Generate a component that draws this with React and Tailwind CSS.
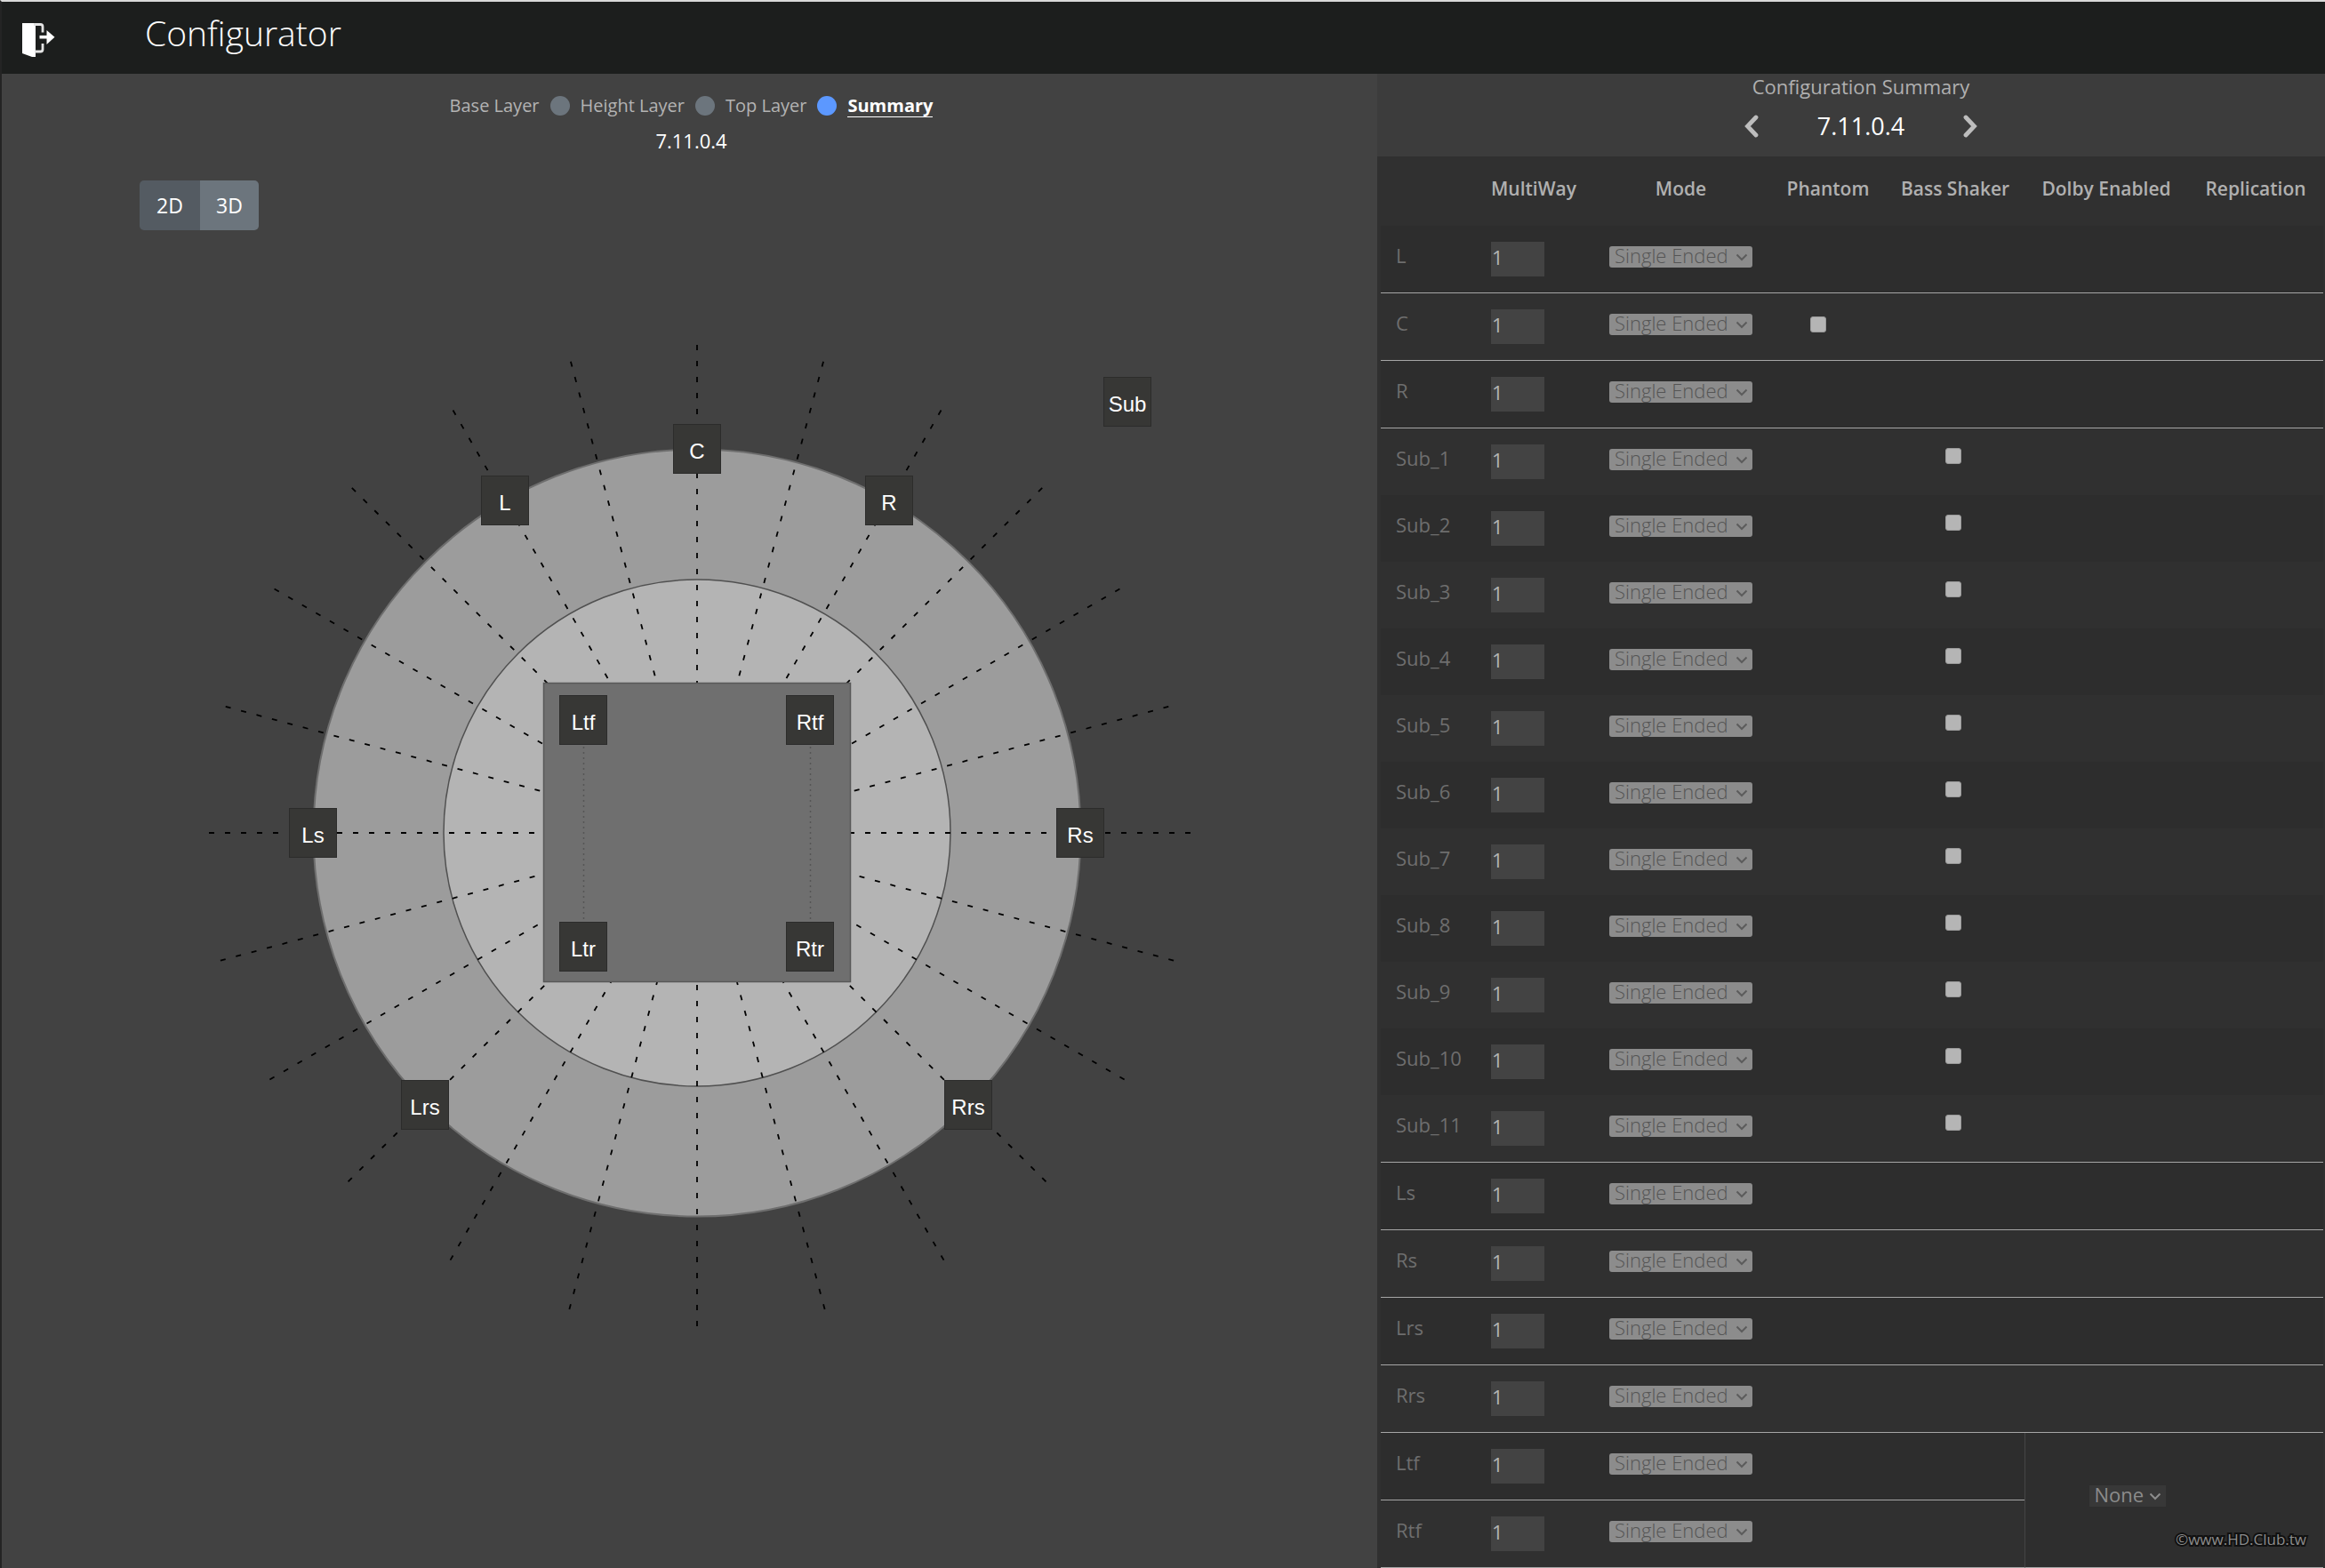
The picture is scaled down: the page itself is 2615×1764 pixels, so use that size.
import React from 'react';

const FONT = "font-['Open_Sans','Noto_Sans',sans-serif]";

// Ray diagram geometry
const CENTER = { x: 782, y: 678 };
const RAY_ANGLES = [-90, -75, -60, -45, -30, -15, 0, 15, 30, 45, 60, 75];

const SPEAKERS = [
  { name: 'C', x: 755, y: 218 },
  { name: 'L', x: 539, y: 276 },
  { name: 'R', x: 971, y: 276 },
  { name: 'Sub', x: 1239, y: 165 },
  { name: 'Ls', x: 323, y: 650 },
  { name: 'Rs', x: 1186, y: 650 },
  { name: 'Ltf', x: 627, y: 523 },
  { name: 'Rtf', x: 882, y: 523 },
  { name: 'Ltr', x: 627, y: 778 },
  { name: 'Rtr', x: 882, y: 778 },
  { name: 'Lrs', x: 449, y: 956 },
  { name: 'Rrs', x: 1060, y: 956 }
];

const CHANNELS = [
  { name: 'L', line: true },
  { name: 'C', line: true, phantom: true },
  { name: 'R', line: true },
  ...Array.from({ length: 11 }, (_, i) => ({ name: `Sub_${i + 1}`, line: i === 10, shaker: true })),
  { name: 'Ls', line: true },
  { name: 'Rs', line: true },
  { name: 'Lrs', line: true },
  { name: 'Rrs', line: true },
  { name: 'Ltf', line: true, dolby: 'open' },
  { name: 'Rtf', line: true, dolby: 'covered' }
];

function ExitIcon() {
  return <svg width="38" height="39" viewBox="0 0 38 39" fill="none" aria-hidden="true">
      <path d="M1 0H15L16 2V38H12L1 34Z" fill="#fff" />
      <path d="M14 1.500H21.500Q24 1.500 24 4V10.500M24 23V29.500Q24 32 21.500 32H15" stroke="#e4e4e4" strokeWidth="2.800" />
      <path d="M20.500 15.700H29" stroke="#fff" strokeWidth="3.600" />
      <path d="M28.500 8L37.500 15.700L28.500 24Z" fill="#fff" />
    </svg>;
}

function Chevron({ d }) {
  return <svg width="16" height="26" viewBox="0 0 16 26" fill="none" aria-hidden="true">
      <path d={d} stroke="#bdbdbd" strokeWidth="4.800" strokeLinecap="round" strokeLinejoin="miter" />
    </svg>;
}

function Arrow({ color }) {
  return <svg className="pointer-events-none absolute right-[5px] top-[8px]" width="14" height="9" viewBox="0 0 14 9" fill="none" aria-hidden="true">
      <path d="M1.500 1.500L7 7L12.500 1.500" stroke={color} strokeWidth="2" />
    </svg>;
}

function SpeakerMap() {
  return <svg className="block w-full" viewBox="0 0 1547 1380" role="img" aria-label="Speaker layout">
      <circle cx={CENTER.x} cy={CENTER.y} r="431.500" fill="#9c9c9c" stroke="#6e6e6e" strokeWidth="2" />
      <circle cx={CENTER.x} cy={CENTER.y} r="285" fill="#b4b4b4" stroke="#505050" strokeWidth="1.500" />
      {RAY_ANGLES.map(angle => <line key={angle} x1={CENTER.x} y1={CENTER.y - 549} x2={CENTER.x} y2={CENTER.y + 556} stroke="#000" strokeWidth="1.800" strokeDasharray="6 12" transform={`rotate(${angle} ${CENTER.x} ${CENTER.y})`} />)}
      <rect x="609.500" y="509.500" width="345" height="336" fill="#6f6f6f" stroke="#585858" strokeWidth="1.500" />
      <path d="M654.500 581V778M909.500 581V778" stroke="#555" strokeWidth="1.500" strokeDasharray="2 4" />
      {SPEAKERS.map(s => <g key={s.name}>
          <rect x={s.x + 0.5} y={s.y + 0.5} width="53" height="55" fill="#373735" stroke="#2c2c2b" />
          <text x={s.x + 27} y={s.y + 39} textAnchor="middle" className="fill-white font-['Liberation_Sans',Arial,sans-serif] text-[24px]">{s.name}</text>
        </g>)}
    </svg>;
}

function Steps() {
  return <nav className="flex items-center justify-center gap-3 pl-1 text-[20px] leading-7 text-[#b3b3b3]">
      <a href="#base">Base Layer</a>
      <span className="size-[22px] rounded-full bg-[#6c757d]" />
      <a href="#height">Height Layer</a>
      <span className="size-[22px] rounded-full bg-[#6c757d]" />
      <a href="#top">Top Layer</a>
      <span className="size-[22px] rounded-full bg-[#5c98ff]" />
      <a href="#summary" className="border-b border-white font-bold leading-6 text-white">Summary</a>
    </nav>;
}

function ChannelRow({ channel, odd }) {
  const { name, line, phantom, shaker, dolby } = channel;
  const cell = `align-top p-0 ${line ? 'h-[76px] border-b border-[#a6a6a6]' : 'h-[75px]'}`;
  const box = 'mx-auto block size-[18px] appearance-none rounded-[3px] border border-[#9a9a9a] bg-[#b5b5b5]';
  return <tr className={odd ? 'bg-[#2d2d2d]' : 'bg-[#303030]'}>
      <th scope="row" className={`${cell} text-left font-normal`}>
        <div className="pl-[17px] pt-[19px] leading-7 text-[#6e6e6e]">{name}</div>
      </th>
      <td className={cell}>
        <div className="pl-[17px] pt-[18px]">
          <input type="text" defaultValue="1" aria-label={`${name} MultiWay`} className="block h-[39px] w-[60px] bg-[#434343] px-px pb-[6px] text-[#b4b4b4]" />
        </div>
      </td>
      <td className={cell}>
        <div className="flex justify-center pt-[23px]">
          <div className="relative flex h-[24px] items-end rounded-[3px] bg-[#8c8c8c]">
            <select disabled aria-label={`${name} mode`} className="block h-[28px] w-[161px] appearance-none bg-transparent pl-[6px] font-light leading-[28px] text-[#555] opacity-100">
              <option>Single Ended</option>
            </select>
            <Arrow color="#5c5c5c" />
          </div>
        </div>
      </td>
      <td className={cell}>
        {phantom && <div className="pr-[22px] pt-[26px]"><input type="checkbox" aria-label={`${name} phantom`} className={box} /></div>}
      </td>
      <td className={cell}>
        {shaker && <div className="pr-1 pt-[22px]"><input type="checkbox" aria-label={`${name} bass shaker`} className={box} /></div>}
      </td>
      {dolby === 'open' && <>
        <td rowSpan={2} className="border-b border-l border-b-[#a6a6a6] border-l-[#454545] bg-[#2e2e2e] p-0 align-top">
          <div className="flex justify-center pl-[46px] pt-[59px]">
            <div className="relative flex h-[24px] items-end bg-[#383838]">
              <select aria-label="Dolby Enabled" className="block h-[28px] w-[86px] appearance-none bg-transparent pl-[6px] leading-[28px] text-[#8c8c8c]">
                <option>None</option>
              </select>
              <Arrow color="#8c8c8c" />
            </div>
          </div>
        </td>
        <td rowSpan={2} className="border-b border-[#a6a6a6] bg-[#2e2e2e] p-0" />
      </>}
      {!dolby && <>
        <td className={cell} />
        <td className={cell} />
      </>}
    </tr>;
}

function Summary() {
  return <section className="w-[1066px] shrink-0 bg-[#303030]">
      <div className="flex h-[93px] flex-col items-center bg-[#3c3c3c] pl-[22px]">
        <h2 className="text-[22px] leading-7 text-[#b0b0b0]">Configuration Summary</h2>
        <div className="flex items-center gap-[66px] pt-[15px]">
          <button type="button" aria-label="Previous"><Chevron d="M13 3L3.500 13L13 23" /></button>
          <span className="text-[27px] leading-8 text-white">7.11.0.4</span>
          <button type="button" aria-label="Next"><Chevron d="M3 3L12.500 13L3 23" /></button>
        </div>
      </div>
      <div className="pl-1 pr-[2px]">
        <table className="w-full table-fixed border-separate border-spacing-0 text-[22px]">
          <colgroup>
            <col className="w-[107px]" />
            <col className="w-[130px]" />
            <col className="w-[201px]" />
            <col className="w-[130px]" />
            <col className="w-[156px]" />
            <col className="w-[184px]" />
            <col className="w-[152px]" />
          </colgroup>
          <thead>
            <tr className="h-[78px] whitespace-nowrap text-[21px] leading-7 text-[#b0b0b0]">
              {['', 'MultiWay', 'Mode', 'Phantom', 'Bass Shaker', 'Dolby Enabled', 'Replication'].map(h => <th key={h} className="p-0 pt-[22px] align-top font-semibold">{h}</th>)}
            </tr>
          </thead>
          <tbody>
            {CHANNELS.map((c, i) => <ChannelRow key={c.name} channel={c} odd={i % 2 === 0} />)}
          </tbody>
        </table>
      </div>
    </section>;
}

export default function App() {
  return <div className={`relative min-h-screen border-l-2 border-t-2 border-l-[#242424] border-t-[#d9d9d9] bg-[#424242] ${FONT}`}>
      <header className="flex h-[81px] items-start bg-[#1c1e1d]">
        <button type="button" aria-label="Exit" className="ml-[22px] mt-[24px]"><ExitIcon /></button>
        <h1 className="ml-[101px] mt-[11px] text-[39px] font-light leading-[48px] text-white">Configurator</h1>
      </header>
      <main className="flex">
        <section className="min-w-0 flex-1">
          <div className="pt-[22px]">
            <Steps />
            <p className="pl-1 pt-[11px] text-center text-[22px] leading-7 text-white">7.11.0.4</p>
          </div>
          <div className="ml-[155px] mt-[31px] flex w-fit overflow-hidden rounded-[5px] text-[23px] leading-8 text-white">
            <button type="button" className="h-[56px] w-[68px] bg-[#545b62]">2D</button>
            <button type="button" className="h-[56px] w-[66px] bg-[#6c757d]">3D</button>
          </div>
          <SpeakerMap />
        </section>
        <Summary />
      </main>
      <div className="absolute bottom-[20px] right-[21px] text-[17px] leading-6 text-[#8c8c8c] [paint-order:stroke_fill] [-webkit-text-stroke:4px_#111]">©www.HD.Club.tw</div>
    </div>;
}
